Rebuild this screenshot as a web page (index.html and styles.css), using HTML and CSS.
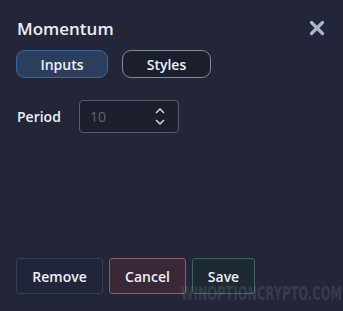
FILE: index.html
```html
<!DOCTYPE html>
<html lang="en">
<head>
  <meta charset="UTF-8">
  <meta name="viewport" content="width=device-width, initial-scale=1.0">
  <title>Momentum</title>
  <link rel="stylesheet" href="styles.css">
</head>
<body>
  <div class="dialog">
    <div class="dialog-header">
      <h1>Momentum</h1>
      <button class="close-btn" aria-label="Close">
        <svg width="16" height="16" viewBox="0 0 16 16">
          <path d="M2.5 2.5 L13.5 13.5 M13.5 2.5 L2.5 13.5" stroke="#a9b6cc" stroke-width="3.2" stroke-linecap="round"/>
        </svg>
      </button>
    </div>

    <div class="tabs">
      <button class="tab active">Inputs</button>
      <button class="tab">Styles</button>
    </div>

    <div class="field">
      <label for="period">Period</label>
      <div class="number-input">
        <input type="text" id="period" value="10">
        <div class="spinner">
          <svg width="12" height="8" viewBox="0 0 12 8"><path d="M2 6 L6 2 L10 6" fill="none" stroke="#d5d9e3" stroke-width="1.5"/></svg>
          <svg width="12" height="8" viewBox="0 0 12 8"><path d="M2 2 L6 6 L10 2" fill="none" stroke="#d5d9e3" stroke-width="1.5"/></svg>
        </div>
      </div>
    </div>

    <div class="dialog-footer">
      <button class="btn btn-remove">Remove</button>
      <button class="btn btn-cancel">Cancel</button>
      <button class="btn btn-save">Save</button>
    </div>

    <div class="watermark">WINOPTIONCRYPTO.COM</div>
  </div>
</body>
</html>
```

FILE: styles.css
```css
* {
  margin: 0;
  padding: 0;
  box-sizing: border-box;
  font-family: 'Open Sans', 'Noto Sans', sans-serif;
}

body {
  background: #222638;
  width: 343px;
  height: 311px;
  overflow: hidden;
}

.dialog {
  position: relative;
  display: flex;
  flex-direction: column;
  height: 311px;
  padding: 17px 16px 17px 16px;
  color: #eef0f5;
}

.dialog-header {
  display: flex;
  justify-content: space-between;
  align-items: center;
  height: 22px;
}

.dialog-header h1 {
  font-size: 17px;
  font-weight: 600;
  padding-left: 1px;
  color: #eceef3;
}

.close-btn {
  background: none;
  border: none;
  width: 16px;
  height: 16px;
  margin-right: 2px;
  cursor: pointer;
}

.tabs {
  display: flex;
  gap: 14px;
  margin-top: 11px;
}

.tab {
  height: 28px;
  border-radius: 9px;
  font-size: 14px;
  font-weight: 600;
  color: #eef0f5;
  cursor: pointer;
  width: 89px;
  background: #1b1e2c;
  border: 1px solid #858996;
}

.tab.active {
  width: 92px;
  background: #2c3e5e;
  border-color: #3a68a6;
}

.field {
  display: flex;
  align-items: center;
  margin-top: 22px;
}

.field label {
  font-size: 14px;
  font-weight: 600;
  width: 63px;
  padding-left: 1px;
}

.number-input {
  display: flex;
  align-items: center;
  width: 100px;
  height: 33px;
  background: #1b1f2e;
  border: 1px solid #585d6e;
  border-radius: 4px;
  padding: 0 12px 0 10px;
}

.number-input input {
  flex: 1;
  width: 40px;
  background: none;
  border: none;
  outline: none;
  color: #5f6576;
  font-size: 14px;
}

.spinner {
  display: flex;
  flex-direction: column;
  gap: 3px;
}

.spinner svg {
  display: block;
}

.dialog-footer {
  display: flex;
  gap: 6px;
  margin-top: auto;
}

.btn {
  height: 36px;
  border-radius: 3px;
  font-size: 14px;
  font-weight: 600;
  color: #eef0f5;
  cursor: pointer;
}

.btn-remove {
  width: 87px;
  background: #20253a;
  border: 1px solid #383d50;
}

.btn-cancel {
  width: 77px;
  background: #3a2836;
  border: 1px solid #85606d;
}

.btn-save {
  width: 63px;
  background: #1d2a33;
  border: 1px solid #3f6468;
}

.watermark {
  position: absolute;
  right: 1px;
  bottom: 6px;
  font-family: 'DejaVu Sans Condensed', 'DejaVu Sans', sans-serif;
  font-weight: bold;
  font-size: 20px;
  letter-spacing: 0;
  transform: scaleX(0.64);
  transform-origin: right center;
  color: rgba(200, 205, 215, 0.14);
  pointer-events: none;
}
```
